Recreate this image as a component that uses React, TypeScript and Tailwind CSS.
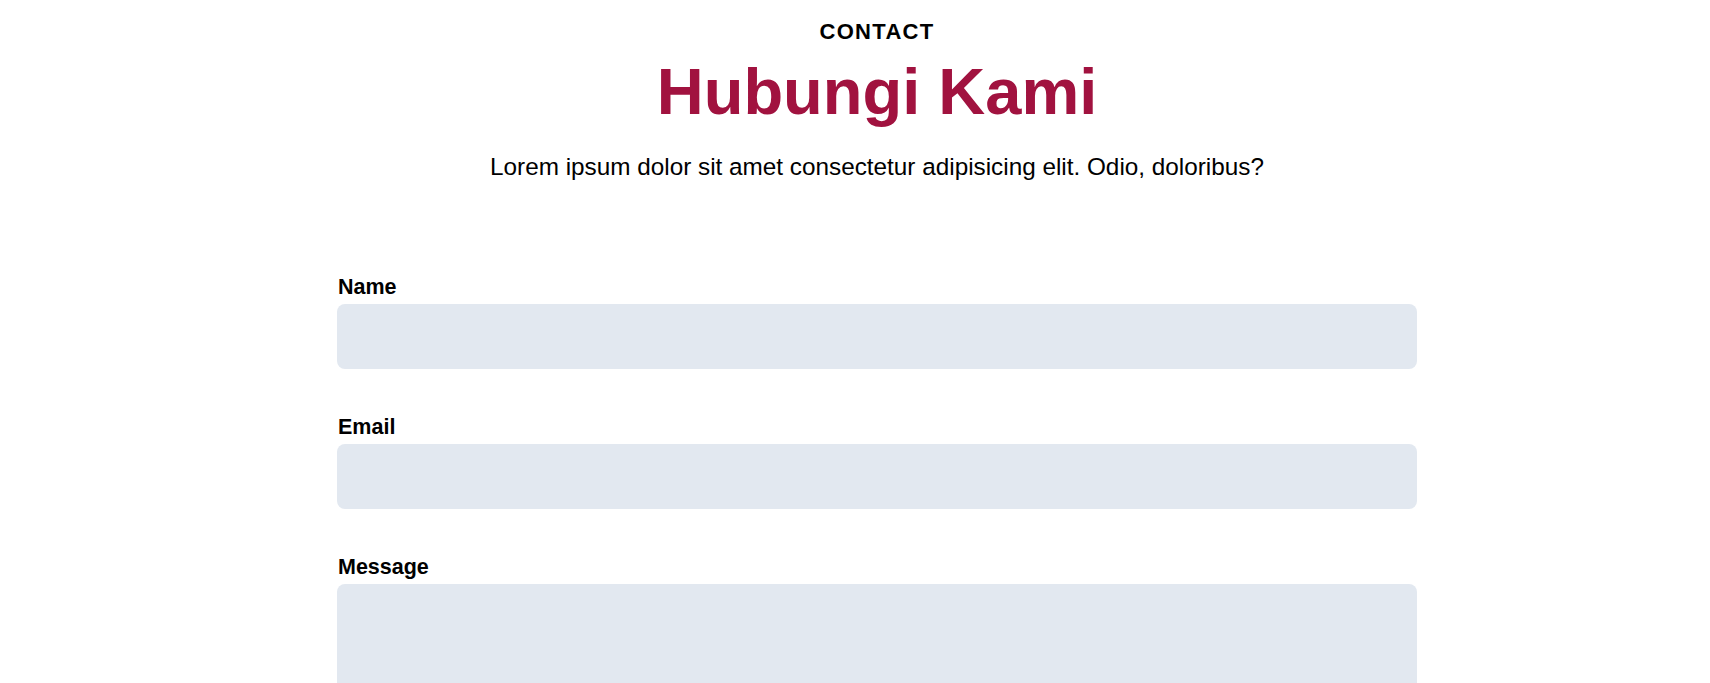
export default function App() {
  return (
    <div className="min-h-screen bg-white pl-11 text-black font-['Liberation_Sans',Arial,sans-serif]">
      <section className="mx-auto w-[1080px] pt-[18px]">
        <div className="text-center">
          <p className="text-[22px] leading-7 font-bold tracking-[0.06em]">CONTACT</p>
          <h1 className="mt-[13px] text-[65px] leading-none font-bold text-[#a1123f]">Hubungi Kami</h1>
          <p className="mt-[27px] text-[24.3px] leading-8">
            Lorem ipsum dolor sit amet consectetur adipisicing elit. Odio, doloribus?
          </p>
        </div>

        <form className="mt-[90px] flex flex-col gap-[44px]">
          <div className="flex flex-col">
            <label className="pl-px text-[21.5px] leading-7 font-bold">Name</label>
            <input type="text" className="mt-[3px] h-[65px] w-full rounded-lg bg-[#e2e8f0] px-4 outline-none" />
          </div>
          <div className="flex flex-col">
            <label className="pl-px text-[21.5px] leading-7 font-bold">Email</label>
            <input type="email" className="mt-[3px] h-[65px] w-full rounded-lg bg-[#e2e8f0] px-4 outline-none" />
          </div>
          <div className="flex flex-col">
            <label className="pl-px text-[21.5px] leading-7 font-bold">Message</label>
            <textarea className="mt-[3px] h-48 w-full resize-none rounded-lg bg-[#e2e8f0] p-4 outline-none" />
          </div>
        </form>
      </section>
    </div>
  );
}
